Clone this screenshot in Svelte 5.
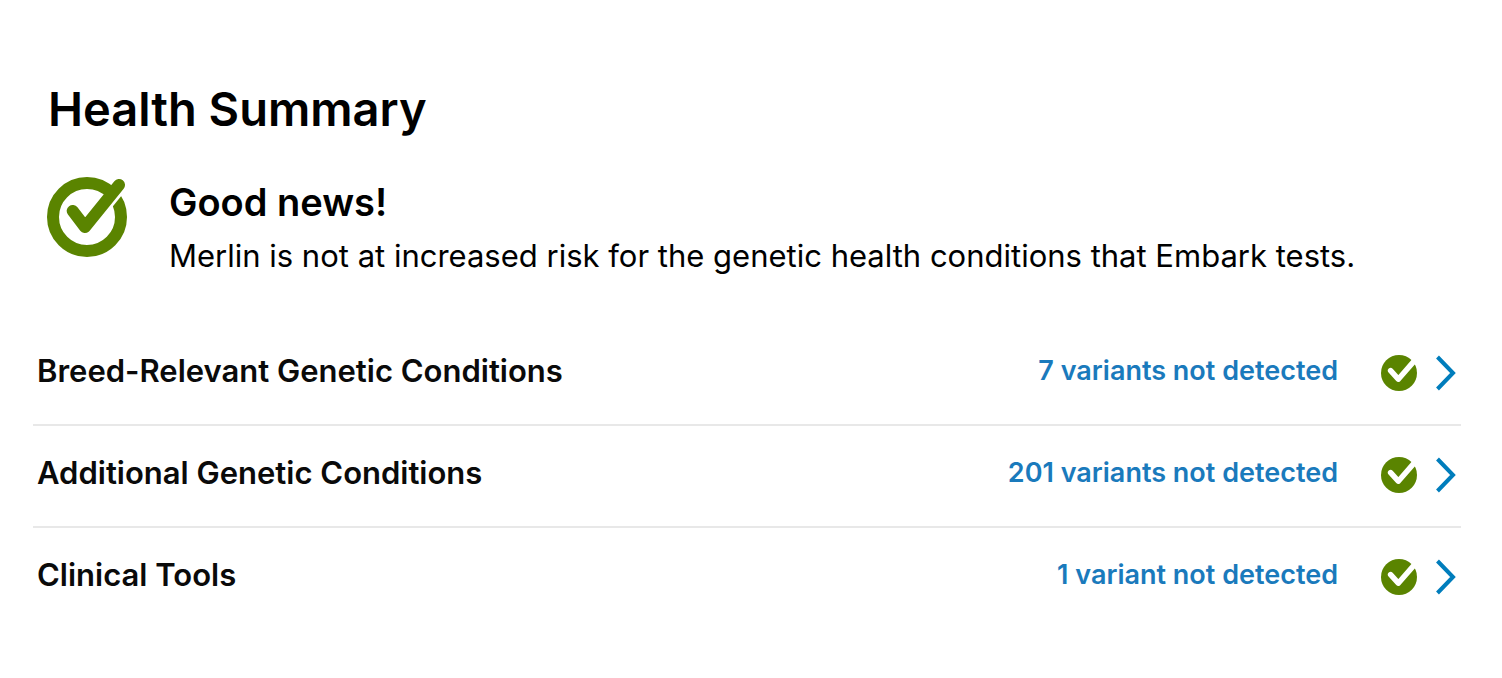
<script>
  const rows = [
    { title: 'Breed-Relevant Genetic Conditions', result: '7 variants not detected' },
    { title: 'Additional Genetic Conditions', result: '201 variants not detected' },
    { title: 'Clinical Tools', result: '1 variant not detected' }
  ];
</script>

<main>
  <h1>Health Summary</h1>
  <section class="news">
    <svg class="seal" viewBox="0 0 80 80" aria-hidden="true">
      <circle cx="40" cy="40" r="34" fill="none" stroke="#5a8400" stroke-width="12" />
      <path d="M40 51.5L76 7.5" fill="none" stroke="#fff" stroke-width="12" />
      <path d="M25.7 33.9L38 50L72 8" fill="none" stroke="#5a8400" stroke-width="12" stroke-linecap="round" stroke-linejoin="round" />
    </svg>
    <div>
      <h2>Good news!</h2>
      <p>Merlin is not at increased risk for the genetic health conditions that Embark tests.</p>
    </div>
  </section>
  <ul>
    {#each rows as row}
      <li>
        <a href="#details">
          <span class="title">{row.title}</span>
          <span class="result">{row.result}</span>
          <svg class="badge" viewBox="0 0 36 36" aria-hidden="true">
            <circle cx="18" cy="18" r="18" fill="#5a8400" />
            <path d="M9.6 15.6L17.3 24.2L34 5" fill="none" stroke="#fff" stroke-width="5.5" stroke-linecap="round" stroke-linejoin="round" />
          </svg>
          <svg class="chevron" viewBox="0 0 21 36" aria-hidden="true">
            <path d="M2.5 2L18 18L2.5 34" fill="none" stroke="#007dbc" stroke-width="4" />
          </svg>
        </a>
      </li>
    {/each}
  </ul>
</main>

<style>
  :global(body) { margin: 0; background: #fff; }
  main { padding: 80px 41px 48px 33px; font-family: Inter, sans-serif; color: #000; }
  h1, h2, p, ul { margin: 0; }
  h1 { padding-left: 15px; font-size: 47px; line-height: 58px; font-weight: 600; }
  .news { display: flex; gap: 42px; padding: 39px 0 0 14px; }
  .seal { width: 80px; height: 80px; flex: none; }
  h2 { font-size: 38px; line-height: 50px; font-weight: 600; }
  p { font-size: 31px; line-height: 58px; }
  ul { list-style: none; padding: 39px 0 0; }
  li + li { border-top: 2px solid #e8e8e8; }
  a { display: flex; align-items: center; box-sizing: border-box; min-height: 100px; padding: 0 5px 2px 4px; color: inherit; text-decoration: none; }
  .title, .result { padding-bottom: 6px; font-weight: 600; }
  .title { flex: 1; font-size: 31px; color: #0a0a0a; }
  .result { font-size: 27px; color: #1a7abc; }
  .badge { flex: none; width: 36px; height: 36px; margin: 0 18px 0 43px; }
  .chevron { flex: none; width: 21px; height: 36px; }
</style>
